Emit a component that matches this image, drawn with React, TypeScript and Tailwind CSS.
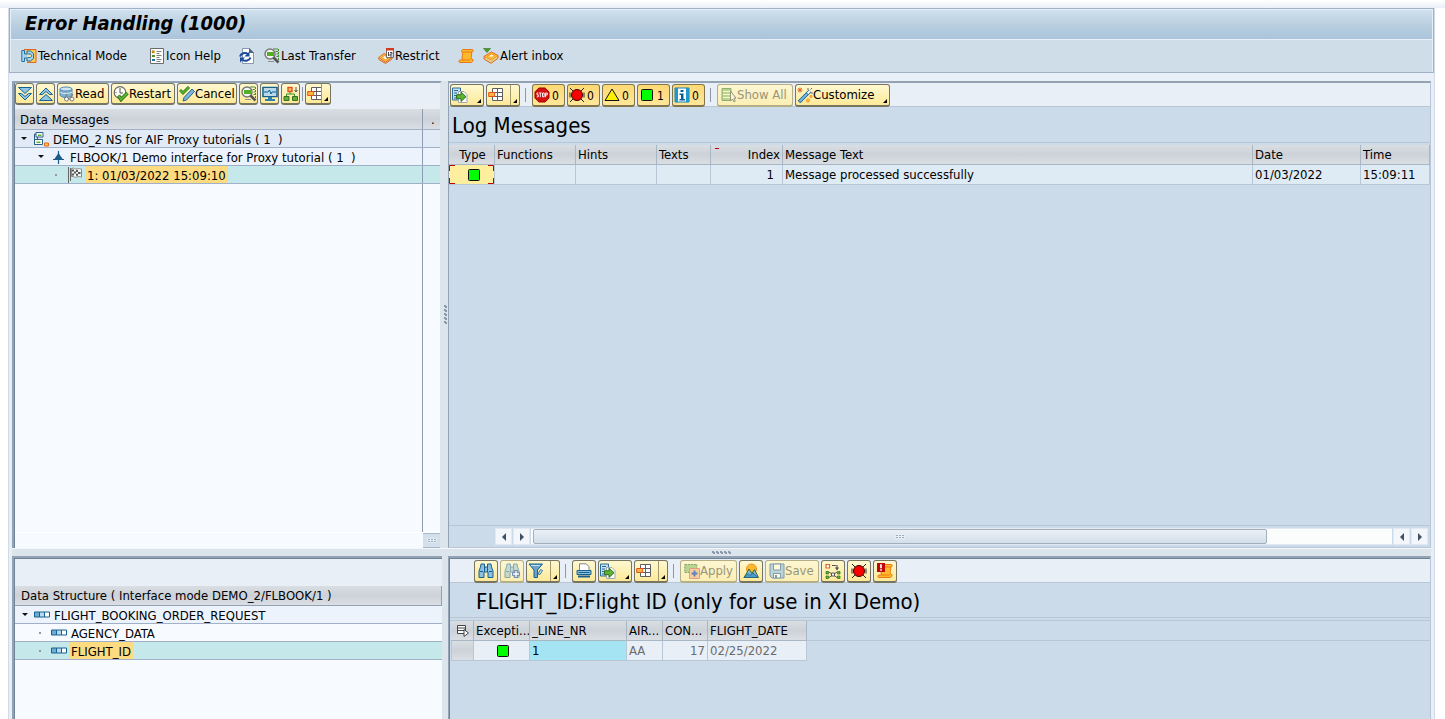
import React from "react";

type IconProps = { children: React.ReactNode; className?: string; box?: string };

function Svg({ children, className = "h-4 w-4", box = "0 0 16 16" }: IconProps) {
  return (
    <svg viewBox={box} className={`shrink-0 ${className}`} fill="none" aria-hidden="true">
      {children}
    </svg>
  );
}

/* ---------- icons ---------- */

const TechIcon = () => (
  <Svg>
    <path d="M3 1.500h12v13H6" fill="#fbc94f" stroke="#e2661c" />
    <path d="M.8 2.500v11h2.700v-3.500H6v3h3.500l3-2.500V5.500L9.500 3H6v3H3.500V2.500z" fill="#a9d4ee" stroke="#1d6fa5" />
    <path d="M6.500 6H9c2 0 2 3.500 0 3.500H6.500" stroke="#1d6fa5" fill="#fde7a8" />
  </Svg>
);

const LegendIcon = () => (
  <Svg>
    <path d="M1.500.5h13v15h-13z" fill="#fff" stroke="#6b6b6b" />
    <path d="M3 2.500l2.500 2.500M5.500 2.500L3 5" stroke="#b88a00" strokeWidth="1.200" />
    <path d="M3 7h3v2H3z" fill="#4d8b2b" />
    <path d="M3 11h3v2H3z" fill="#1d6fa5" />
    <path d="M7.500 3.500h5M7.500 5.500h3M7.500 7.500h5M7.500 9.500h3M7.500 11.500h5M7.500 13.500h4" stroke="#7d7d7d" />
  </Svg>
);

const RefreshIcon = () => (
  <Svg>
    <path d="M4.500.5h7l4 4v11h-11z" fill="#fff" stroke="#8b98ab" />
    <path d="M11.500.5v4h4" fill="#53617a" stroke="#53617a" />
    <path d="M2 8.500a5 4.500 0 0 1 8-2.500" stroke="#174a9b" strokeWidth="2" />
    <path d="M11.500 3.500v5h-5z" fill="#174a9b" />
    <path d="M12.500 9.500a5 4.500 0 0 1-8 2.200" stroke="#174a9b" strokeWidth="2" />
    <path d="M2 14.500V9.500h5z" fill="#174a9b" />
  </Svg>
);

const SearchDocIcon = () => (
  <Svg>
    <path d="M9 1h5M11.500 3.500h2.500M12.500 6h2M12.500 8.500h2" stroke="#4d8b2b" strokeWidth="1.200" />
    <path d="M14.500 1v11" stroke="#3f8f22" strokeDasharray="2 1" />
    <circle cx="6" cy="6" r="5" fill="#f2f5f2" stroke="#777" strokeWidth="1.400" />
    <path d="M3 4h7v4H3z" fill="#54ae26" />
    <path d="M9.500 9.500l5 5" stroke="#555" strokeWidth="2.600" />
    <path d="M4 13.500h6" stroke="#8f8f8f" />
  </Svg>
);

const RestrictIcon = () => (
  <Svg>
    <path d="M.8 9.500L6 5.500l8 4-6.500 4.800z" fill="#fdc53a" stroke="#e2661c" />
    <path d="M3.500 9.500L6.500 7.500 11 9.500l-3.500 2.500z" fill="#fff6da" stroke="#ef8c1e" />
    <path d="M.8 9.500v2l6.700 4 6.500-4.500v-1.500" stroke="#e2661c" />
    <path d="M8.500.5h7v9h-7z" fill="#fff" stroke="#7a6b6b" />
    <path d="M8 0h8v2.500H8z" fill="#d13a1e" />
    <path d="M10.500 4v4M12 4.500h2v1.700h-2V8h2.500" stroke="#333" strokeWidth=".9" />
  </Svg>
);

const ScrollShape = () => (
  <>
    <path d="M5 1.500h9.500c1 0 1 2.500-.5 2.500h-.5c1 3-1.500 5 .5 7.500h1v1c-.5 1.500-1 2-2 2H2c-1.500 0-1.500-2.500 0-2.500h2.500C3 9 5.500 7 4.500 4.500 3 4.500 3.500 1.500 5 1.500z" fill="#fdb92a" stroke="#e87817" />
    <path d="M5 4h8.500M4.500 12h8" stroke="#e87817" />
  </>
);

const ScrollIcon = () => (
  <Svg>
    <ScrollShape />
  </Svg>
);

const AlertInboxIcon = () => (
  <Svg>
    <path d="M1 8.500L8.500 4l6.500 3.500-6.500 4.500z" fill="#fdc53a" stroke="#e2661c" />
    <path d="M4 8.500l4.500-2.500 3.500 1.800-3.700 2.400z" fill="#fff6da" stroke="#ef8c1e" />
    <path d="M1 8.500V11l7 4.300 7-5V7.500" stroke="#e2661c" fill="#fdc53a" fillOpacity=".5" />
    <path d="M.5.5h7L4 4.500z" fill="#4d9c2c" stroke="#2f6e1a" strokeWidth=".6" />
  </Svg>
);

const ExpandIcon = () => (
  <Svg>
    <path d="M1.500 1.500h13L8 7.500zM1.500 7.500h3L8 10.500l3.500-3h3L8 14z" fill="#8fc6e6" stroke="#17618f" />
  </Svg>
);

const CollapseIcon = () => (
  <Svg>
    <path d="M1.500 14.500h13L8 8.500zM1.500 8.500h3L8 5.500l3.500 3h3L8 2z" fill="#8fc6e6" stroke="#17618f" />
  </Svg>
);

const ReadIcon = () => (
  <Svg>
    <path d="M1 3v6c0 1.500 3 2.500 6 2.500s6-1 6-2.500V3" fill="#7fb0d2" stroke="#5288ae" />
    <ellipse cx="7" cy="3" rx="6" ry="2" fill="#cfe5f3" stroke="#5288ae" />
    <path d="M1 6c1 2 10 2 12 0" stroke="#d8eaf5" />
    <circle cx="7.500" cy="13" r="2" fill="#fff" stroke="#777" />
    <circle cx="13" cy="13" r="2" fill="#fff" stroke="#777" />
    <path d="M6 12l2-4M12 12l2-4M9.500 13h1.500" stroke="#777" />
  </Svg>
);

const RestartIcon = () => (
  <Svg>
    <circle cx="7" cy="6.500" r="5.800" fill="#fdfdf6" stroke="#6c6c6c" strokeWidth="1.200" />
    <path d="M7 2v5h3M2.500 6.500h1M7 11v1" stroke="#555" />
    <path d="M5.500 9.500l2.500 4 6.500-6.500" stroke="#2f6e1a" strokeWidth="3.600" />
    <path d="M5.500 9.500l2.500 4 6.500-6.500" stroke="#5cb531" strokeWidth="1.800" />
  </Svg>
);

const CancelIcon = () => (
  <Svg>
    <path d="M1 4l3 3 6-6" stroke="#2f7a1c" strokeWidth="3" />
    <path d="M1 4l3 3 6-6" stroke="#5cb531" strokeWidth="1.500" />
    <path d="M13 3l2.500 2.500-8 8.500-3.500 1 1-3.500z" fill="#7cb5da" stroke="#27658f" />
  </Svg>
);

const MonitorIcon = () => (
  <Svg>
    <path d="M1 1.500h14v9H1z" fill="#fff" stroke="#17618f" strokeWidth="1.600" />
    <path d="M2 3h12v6H2z" fill="#b4daf0" />
    <path d="M2 6h4l1.500-2 1.500 4 1-2h4" stroke="#17618f" />
    <path d="M6 11h4v2h3v2H3v-2h3z" fill="#2f7fb0" />
  </Svg>
);

const HierarchyIcon = () => (
  <Svg>
    <path d="M7 5v3M3.500 11V8h8v3" stroke="#3f8f22" />
    <path d="M5 1.500h4v4H5z" fill="#ffc36a" stroke="#e2541c" strokeWidth="1.400" />
    <path d="M1 10.500h5v4H1zM9.500 10.500h5v4h-5z" fill="#5cb531" stroke="#3d6e28" />
    <path d="M13 1v5M11.500 4L13 6l1.500-2" stroke="#555" />
  </Svg>
);

const LayoutIcon = () => (
  <Svg>
    <path d="M4.500 1.500h10v12h-10z" fill="#fff" stroke="#5f5f5f" />
    <path d="M9.500 1.500v12M4.500 5.500h10M4.500 9.500h10" stroke="#5f5f5f" />
    <path d="M.7 5.500h6v4h-6z" fill="#fdb640" stroke="#e2541c" />
  </Svg>
);

const ExportIcon = () => (
  <Svg>
    <path d="M.5 1h8v12h-8z" fill="#c3dff0" stroke="#2b6d99" />
    <path d="M2 3.500h4M2 6h3M2 8.500h2M2 11h2" stroke="#2b6d99" />
    <path d="M6.500 4.500h5.500l3 3v8H6.500z" fill="#fff" stroke="#a0a8b0" />
    <path d="M4.500 7.800H9V5l5 4.700-5 4.800v-2.800H4.500z" fill="#5cb531" stroke="#2f6e1a" />
  </Svg>
);

const StopIcon = () => (
  <Svg>
    <path d="M4.900 1h6.200L15 4.900v6.200L11.100 15H4.900L1 11.100V4.900z" fill="#d40f0f" stroke="#9c0000" />
    <path d="M4.300 6H3v1.800h1.300v2H2.800M5 6h2.600M6.300 6v4.200M8.500 6h1.700v3.800H8.500zM11.500 10.200V6h1.800v2h-1.800" stroke="#fff" strokeWidth=".9" />
  </Svg>
);

const RedLightIcon = () => (
  <Svg>
    <path d="M1 1l3 3M15 1l-3 3M1 15l3-3M15 15l-3-3M1 5.500v5M15 5.500v5" stroke="#222" />
    <circle cx="8" cy="8" r="5.500" fill="#fb0000" stroke="#3a0000" />
  </Svg>
);

const WarnIcon = () => (
  <Svg>
    <path d="M8 2l7 11.500H1z" fill="#fff200" stroke="#111" />
  </Svg>
);

const GreenIcon = () => (
  <Svg className="h-3 w-3" box="0 0 12 12">
    <rect x=".5" y=".5" width="11" height="11" rx="1" fill="#00ff00" stroke="#111" />
  </Svg>
);

const InfoIcon = () => (
  <Svg>
    <path d="M1 1h14v14H1z" fill="#fff" stroke="#1380b5" />
    <path d="M1 1h3v14H1zM12 1h3v14h-3z" fill="#1f97cf" />
    <path d="M6.500 3h3v2h-3zM5.500 6.500h4V12H11v1.500H5.500V12H7V8H5.500z" fill="#075e93" />
  </Svg>
);

const ShowAllIcon = () => (
  <Svg>
    <path d="M1 1.500h9v12H1z" fill="#b9d48f" stroke="#8fae72" />
    <path d="M2 4.500h7M2 7.500h7M2 10.500h7" stroke="#fdf6cf" strokeWidth="1.200" />
    <path d="M9.500 4v10l2-2 1.500 3 1.200-.8-1.200-3H15z" fill="#f6f3dd" stroke="#989878" />
  </Svg>
);

const WandIcon = () => (
  <Svg>
    <path d="M2 15L13 4" stroke="#17618f" strokeWidth="3.600" />
    <path d="M2.500 14.500L10 7" stroke="#79bbe2" strokeWidth="1.800" />
    <path d="M10.500 6.500L13 4" stroke="#fff" strokeWidth="1.800" />
    <path d="M.5 3h5M3 .5v5M1.200 1.200l3.600 3.600M4.800 1.200L1.200 4.800" stroke="#e2661c" />
    <path d="M11 1v2M15 1l-1.500 1.500M16 6h-2" stroke="#666" />
    <circle cx="14" cy="9.500" r="1.300" fill="#fdb640" stroke="#ef8c1e" strokeWidth=".6" />
    <circle cx="11" cy="13.500" r="1.700" fill="#fdb640" stroke="#ef8c1e" strokeWidth=".6" />
  </Svg>
);

const Binoculars = () => (
  <>
    <path d="M3 1h3.500v3h3V1H13l.5 3 1.500 4v6.500h-5V9H6v5.500H1V8l1.500-4z" fill="#8dbfdf" stroke="#17618f" />
    <path d="M2 8.500h3M11 8.500h3M6.500 4v5M9.500 4v5" stroke="#17618f" />
  </>
);

const FindIcon = () => (
  <Svg>
    <Binoculars />
  </Svg>
);

const FindNextIcon = () => (
  <Svg>
    <g opacity=".5">
      <Binoculars />
    </g>
    <path d="M12 7v8M8 11h8" stroke="#6d86b5" strokeWidth="3.400" />
    <path d="M12 8v6M9 11h6" stroke="#fff" strokeWidth="1.400" />
  </Svg>
);

const FilterIcon = () => (
  <Svg>
    <path d="M1 1h13.500L9.500 7v7.500H6V7z" fill="#6ba3c9" stroke="#17618f" />
    <path d="M3 2.500h9" stroke="#c6e0f0" />
    <path d="M10 11l2.500-4.500 2 1-2.500 4z" fill="#c6e0f0" stroke="#17618f" strokeWidth=".8" />
  </Svg>
);

const PrintIcon = () => (
  <Svg>
    <path d="M3.500 7V.8H10l3 2.700V7" fill="#fff" stroke="#7d8791" />
    <path d="M1 7.500h14v4H1z" fill="#8dbfdf" stroke="#17618f" />
    <path d="M2 13.500h12" stroke="#17618f" strokeWidth="2" />
    <path d="M2.500 9.500h11" stroke="#17618f" />
  </Svg>
);

const ApplyIcon = () => (
  <Svg>
    <path d="M.8 1.500h12v8H.8z" fill="#b9d48f" stroke="#7fa26c" strokeDasharray="2 1" />
    <path d="M5.500 5.500h10v10h-10z" fill="#f7cda0" stroke="#e0a080" />
    <path d="M10.500 7.500v6M7.500 10.500h6" stroke="#5c86b5" strokeWidth="2" />
  </Svg>
);

const OverviewIcon = () => (
  <Svg>
    <circle cx="8.500" cy="6" r="5" fill="#fdb92a" stroke="#ef8c1e" />
    <path d="M1 14.500L6 6l3 4.500 2.500-4 4 8z" fill="#7fb8da" stroke="#3d6e28" />
    <path d="M1 14.500l4-4 2 2 3-2.500 5 4.500z" fill="#4c9ac8" stroke="#17618f" strokeWidth=".8" />
  </Svg>
);

const SaveIcon = () => (
  <Svg>
    <path d="M1 1h14v14H3l-2-2z" fill="#bcd3da" stroke="#7f9cab" />
    <path d="M4.500 1h7v6h-7zM4.500 10.500h7V15h-7z" fill="#fff9dc" stroke="#7f9cab" />
    <path d="M6 12h2v3H6z" fill="#7f9cab" />
  </Svg>
);

const MapIcon = () => (
  <Svg>
    <path d="M1 1.500h3.500V5H1z" fill="#fff" stroke="#e2661c" strokeWidth="1.200" />
    <path d="M7 2.500h4M12 2v4M10.500 4.500L12 6.500l1.500-2" stroke="#555" strokeWidth="1.200" />
    <path d="M4 9l8 5.500M12 9l-8 5.500" stroke="#555" />
    <path d="M1 8.500h2.500V11H1zM12.500 8.500H15V11h-2.500zM1 13h2.500v2.500H1zM12.500 13H15v2.500h-2.500z" fill="#5cb531" stroke="#2f6e1a" strokeWidth=".7" />
    <path d="M6.500 10h3v3h-3z" fill="#fff" stroke="#555" />
  </Svg>
);

const ScrollErrIcon = () => (
  <Svg>
    <ScrollShape />
    <path d="M0 0h8v9H0z" fill="#c10808" />
    <path d="M4 1.200v4M4 6.300v1.500" stroke="#fff" strokeWidth="1.700" />
  </Svg>
);

const NamespaceIcon = () => (
  <Svg>
    <path d="M3 1.500h7v4.500H3z" fill="#fff" stroke="#2c5f86" />
    <path d="M5 3.500h3.500V5H5z" fill="#5cb531" />
    <path d="M1.500 8.500h8v5h-8z" fill="#fff" stroke="#2c5f86" />
    <path d="M3.500 10.500h4V12h-4z" fill="#5cb531" />
    <path d="M4.500 6v2.500M1.500 13.500V3h1.500" stroke="#2c5f86" />
    <path d="M11.500 12h4v3h-4z" fill="#fdc53a" stroke="#e2661c" />
  </Svg>
);

const InterfaceIcon = () => (
  <Svg>
    <path d="M8.500 2v13M3 10.500h11" stroke="#1d5c86" strokeWidth="1.200" />
    <path d="M8.500 4l4.500 6.500H4z" fill="#1d5c86" />
  </Svg>
);

const FlagIcon = () => (
  <Svg>
    <path d="M1.500 0v16M3.500 1v13" stroke="#666" />
    <path d="M4.500 1.500c3-1.500 3.500 1.500 5.500.5 2-1 3 0 4.500 0v8c-2 0-3-1-4.500 0-2 1-3-1-5.500-.5z" fill="#f4f8f8" stroke="#888" />
    <path d="M5 2.500h2v2H5zM9 3h2v2H9zM7 4.500h2v2H7zM11 5h2.500v2H11zM5 6.500h2v2H5zM9 6.800h2v2H9z" fill="#555" />
  </Svg>
);

const StructIcon = () => (
  <Svg className="h-[7px] w-4" box="0 0 16 7">
    <path d="M.5 1h5v5h-5z" fill="#6aaed6" stroke="#17618f" />
    <path d="M5.500 1h5v5h-5z" fill="#b9d9ec" stroke="#17618f" />
    <path d="M10.500 1h5v5h-5z" fill="#fff" stroke="#17618f" />
  </Svg>
);

const SelectAllIcon = () => (
  <Svg className="h-3 w-3" box="0 0 12 12">
    <path d="M.5.5h8v8h-8zM.5 3h8M.5 5.500h8" stroke="#444" fill="#fff" />
    <path d="M7 4.500v7l4.500-3.500z" fill="#fff" stroke="#444" />
  </Svg>
);

/* ---------- building blocks ---------- */

type BtnProps = {
  icon: React.ReactNode;
  text?: string;
  label?: string;
  width: string;
  short?: boolean;
  menu?: boolean;
  split?: boolean;
  pressed?: boolean;
  disabled?: boolean;
};

function Btn({ icon, text, label, width, short, menu, split, pressed, disabled }: BtnProps) {
  const tone = disabled
    ? "border-[#b5ae86] text-[#98957c] from-[#fdf6d2] to-[#fbefb4]"
    : pressed
      ? "border-[#83754a] text-black from-[#fdd873] to-[#ffe69a]"
      : "border-[#77745f] text-black from-[#fff8d0] to-[#fde997]";
  return (
    <button
      type="button"
      aria-label={label ?? text}
      disabled={disabled}
      className={`relative flex shrink-0 items-center overflow-hidden whitespace-nowrap rounded-[3px] border border-b-2 bg-linear-to-b px-px text-[13px] leading-4 ${short ? "h-[22px]" : "h-[23px]"} ${width} ${tone}`}
    >
      {icon}
      {text && <span className={pressed ? "pt-0.5 pl-0.5 text-[12px]" : "pt-px"}>{text}</span>}
      {split && <span className="absolute inset-y-0 right-2 w-px bg-[#a39a6c]" />}
      {menu && (
        <svg viewBox="0 0 4 4" className="absolute right-0.5 bottom-0.5 h-1 w-1" aria-hidden="true">
          <path d="M4 0v4H0z" fill="#000" />
        </svg>
      )}
    </button>
  );
}

const Sep = ({ className = "mx-1" }: { className?: string }) => (
  <span className={`h-3.5 w-px shrink-0 bg-[#8c98a6] ${className}`} />
);

function AppAction({ icon, text, label, className = "" }: { icon: React.ReactNode; text?: string; label?: string; className?: string }) {
  return (
    <button type="button" aria-label={label ?? text} className={`flex shrink-0 items-center gap-px whitespace-nowrap ${className}`}>
      {icon}
      {text && <span>{text}</span>}
    </button>
  );
}

const Caret = () => (
  <svg viewBox="0 0 6 3" className="h-[3px] w-1.5 shrink-0" aria-hidden="true">
    <path d="M0 0h6L3 3z" fill="#111" />
  </svg>
);

const Leaf = () => <span className="h-0.5 w-0.5 shrink-0 bg-[#9a9a9a]" />;

type TreeRowProps = {
  indent: string;
  marker: React.ReactNode;
  icon: React.ReactNode;
  text: string;
  bg: string;
  selected?: boolean;
  tail?: boolean;
};

function TreeRow({ indent, marker, icon, text, bg, selected, tail }: TreeRowProps) {
  return (
    <li className={`flex h-[18px] border-b border-[#9fb0c8] ${bg}`}>
      <div className={`flex min-w-0 flex-1 items-center ${indent}`}>
        <span className="flex w-3 shrink-0 items-center">{marker}</span>
        {icon}
        <span className={`ml-0.5 h-[17px] whitespace-pre px-0.5 leading-[19px] ${selected ? "bg-[#fddb80]" : ""}`}>{text}</span>
      </div>
      {tail && <span className="w-[18px] shrink-0 border-l border-[#8d9cae]" />}
    </li>
  );
}

const Arrow = ({ dir }: { dir: "left" | "right" }) => (
  <button type="button" aria-label={`Scroll ${dir}`} className="flex h-[17px] w-[17px] shrink-0 items-center justify-center border border-[#e2e9f2] bg-[#f3f6fb]">
    <svg viewBox="0 0 4 8" className="h-2 w-1" aria-hidden="true">
      <path d={dir === "left" ? "M4 0v8L0 4z" : "M0 0v8l4-4z"} fill="#3f5263" />
    </svg>
  </button>
);

const Grip = () => (
  <span className="grid grid-cols-3 gap-px">
    {Array.from({ length: 6 }, (_, i) => (
      <span key={i} className="h-px w-0.5 bg-[#9aabbb] outline outline-[#eef3f8]/50" />
    ))}
  </span>
);

const GripDots = ({ vertical }: { vertical?: boolean }) => (
  <svg
    viewBox={vertical ? "0 0 3 20" : "0 0 20 3"}
    className={vertical ? "h-5 w-[3px]" : "h-[3px] w-5"}
    shapeRendering="crispEdges"
    aria-hidden="true"
  >
    {[0, 4, 8, 12, 16].map((n) => (
      <path
        key={n}
        d={vertical ? `M0 ${n}h2v1h1v2H1v-1H0z` : `M${n} 0h2v1h1v2h-2v-1h-1z`}
        fill="#8c9bab"
      />
    ))}
  </svg>
);

const headGrad = "bg-linear-to-b from-[#d9dee3] via-[#cdd2d9] to-[#dbdfe4]";
const th = `h-5 border-r border-b border-[#a9b6c4] pt-px pb-0 pl-0.5 pr-0 text-left font-normal leading-[18px] whitespace-nowrap overflow-hidden ${headGrad}`;
const td = "h-5 border-r border-b border-[#b9c6d6] p-0 px-0.5 leading-[18px] whitespace-nowrap overflow-hidden";

/* ---------- panels ---------- */

function MessagesPanel() {
  return (
    <section className="flex min-w-0 flex-col border-t-2 border-r-2 border-l-2 border-t-[#94a3b3] border-r-[#dbe5eb] border-l-[#94a3b3]">
      <div className="flex flex-1 flex-col border-l border-[#6f8496] bg-[#f7fbff]">
        <div className="flex h-[26px] shrink-0 items-center gap-0.5 bg-[#e8eff7] pb-1">
          <Btn short width="w-[19px]" icon={<ExpandIcon />} label="Expand" />
          <Btn short width="w-[19px]" icon={<CollapseIcon />} label="Collapse" />
          <Btn short width="w-[52px]" icon={<ReadIcon />} text="Read" />
          <Btn short width="w-16" icon={<RestartIcon />} text="Restart" />
          <Btn short width="w-15" icon={<CancelIcon />} text="Cancel" />
          <Btn short width="w-[19px]" icon={<SearchDocIcon />} label="Search" />
          <Btn short width="w-[19px]" icon={<MonitorIcon />} label="Monitor" />
          <Btn short width="w-[19px]" icon={<HierarchyIcon />} label="Hierarchy" />
          <Sep className="mx-0" />
          <Btn short width="w-[26px]" icon={<LayoutIcon />} label="Layout" menu split />
        </div>
        <div className={`flex h-[21px] shrink-0 border-b border-[#9fb0c8] ${headGrad}`}>
          <h2 className="flex-1 pl-[5px] leading-[22px]">Data Messages</h2>
          <span className="w-[18px] border-l border-[#8d9cae] pl-2 leading-[22px]">.</span>
        </div>
        <ul className="shrink-0">
          <TreeRow tail indent="pl-1.5" bg="bg-[#e1eaf7]" marker={<Caret />} icon={<NamespaceIcon />} text="DEMO_2 NS for AIF Proxy tutorials ( 1  )" />
          <TreeRow tail indent="pl-[23px]" bg="bg-[#ecf3fc]" marker={<Caret />} icon={<InterfaceIcon />} text="FLBOOK/1 Demo interface for Proxy tutorial ( 1  )" />
          <TreeRow tail selected indent="pl-10" bg="bg-[#c5e9eb]" marker={<Leaf />} icon={<FlagIcon />} text="1: 01/03/2022 15:09:10" />
        </ul>
        <div className="flex flex-1">
          <span className="flex-1" />
          <span className="w-[18px] border-l border-[#8d9cae]" />
        </div>
        <div className="flex h-4 shrink-0 justify-end border-t border-white">
          <span className="flex w-[17px] items-center justify-center border-y border-[#a6b7c8] bg-[#d3e0ec]">
            <Grip />
          </span>
        </div>
      </div>
    </section>
  );
}

function StructurePanel() {
  return (
    <section className="flex min-w-0 flex-col border-t-2 border-l-2 border-[#94a3b3]">
      <div className="flex flex-1 flex-col border-t border-l border-[#6f8496] bg-[#f7fbff]">
        <div className="h-[27px] shrink-0 bg-[#e8eff7]" />
        <h2 className={`h-5 shrink-0 border-r border-b border-[#94a3b3] pl-1.5 leading-5 ${headGrad}`}>
          Data Structure ( Interface mode DEMO_2/FLBOOK/1 )
        </h2>
        <ul>
          <TreeRow indent="pl-[7px]" bg="bg-[#ecf3fc]" marker={<Caret />} icon={<StructIcon />} text="FLIGHT_BOOKING_ORDER_REQUEST" />
          <TreeRow indent="pl-6" bg="bg-[#f7fbff]" marker={<Leaf />} icon={<StructIcon />} text="AGENCY_DATA" />
          <TreeRow selected indent="pl-6" bg="bg-[#c5e9eb]" marker={<Leaf />} icon={<StructIcon />} text="FLIGHT_ID" />
        </ul>
      </div>
    </section>
  );
}

function LogPanel() {
  return (
    <section className="flex min-w-0 flex-col border-t-2 border-r border-b border-l border-t-[#94a3b3] border-r-[#b9c6d6] border-b-[#b9c6d6] border-l-[#94a3b3] bg-[#cbdbea]">
      <div className="flex h-6 shrink-0 items-center gap-0.5 border-b border-[#b9c6d6] bg-[#e8eff7] pt-px pl-px">
        <Btn width="w-[34px]" icon={<ExportIcon />} label="Export" menu />
        <Btn width="w-[34px]" icon={<LayoutIcon />} label="Layout" menu split />
        <Sep className="mr-1 ml-[3px]" />
        <Btn width="w-[33px]" pressed icon={<StopIcon />} text="0" label="Stops 0" />
        <Btn width="w-[33px]" pressed icon={<RedLightIcon />} text="0" label="Errors 0" />
        <Btn width="w-[33px]" pressed icon={<WarnIcon />} text="0" label="Warnings 0" />
        <Btn width="w-[33px]" pressed icon={<span className="px-0.5"><GreenIcon /></span>} text="1" label="Successes 1" />
        <Btn width="w-[33px]" pressed icon={<InfoIcon />} text="0" label="Information 0" />
        <Sep className="mr-1 ml-[3px]" />
        <Btn width="w-19" disabled icon={<span className="pl-0.5"><ShowAllIcon /></span>} text="Show All" />
        <Btn width="w-[95px]" icon={<WandIcon />} text="Customize" menu />
      </div>
      <h2 className="h-9 shrink-0 border-b border-[#b9c6d6] pl-[3px] text-[22px] leading-[38px]">Log Messages</h2>
      <table className="mt-0.5 w-full shrink-0 table-fixed border-separate border-spacing-0">
        <colgroup>
          <col className="w-[46px]" />
          <col className="w-[81px]" />
          <col className="w-[81px]" />
          <col className="w-[54px]" />
          <col className="w-[72px]" />
          <col />
          <col className="w-[108px]" />
          <col className="w-[69px]" />
        </colgroup>
        <thead>
          <tr>
            <th className={th}><span className="block text-center">Type</span></th>
            <th className={th}>Functions</th>
            <th className={th}>Hints</th>
            <th className={th}>Texts</th>
            <th className={`${th} relative`}>
              <span className="absolute top-[3px] left-1 h-px w-1 bg-[#c00018]" />
              <span className="block pr-0.5 text-right">Index</span>
            </th>
            <th className={th}>Message Text</th>
            <th className={th}>Date</th>
            <th className={th}>Time</th>
          </tr>
        </thead>
        <tbody className="bg-[#deeaf4]">
          <tr>
            <td className={`${td} relative bg-[#ffee9e]`}>
              <svg className="absolute inset-0 h-full w-full" viewBox="0 0 45 19" preserveAspectRatio="none" fill="none" aria-hidden="true">
                <path d="M6 .5H.5V6M39 .5h5.500V6M.5 13v5.500H6M44.500 13v5.500H39" stroke="#c00010" />
              </svg>
              <span className="flex justify-center pl-1"><GreenIcon /></span>
            </td>
            <td className={td} />
            <td className={td} />
            <td className={td} />
            <td className={`${td} text-right`}><span className="pr-1.5">1</span></td>
            <td className={td}>Message processed successfully</td>
            <td className={td}>01/03/2022</td>
            <td className={td}>15:09:11</td>
          </tr>
        </tbody>
      </table>
      <div className="flex-1" />
      <div className="flex h-[22px] shrink-0 items-center gap-px border-t border-[#b9c6d6] pr-0.5 pl-[46px]">
        <Arrow dir="left" />
        <Arrow dir="right" />
        <div className="flex h-[17px] flex-1 border-y border-[#e2e9f2] bg-[#fbfcfc] pl-0.5">
          <div className="flex w-[85.500%] items-center justify-center rounded-[2px] border border-[#a3afbb] bg-linear-to-b from-[#eaf0f6] to-[#d3dfea]">
            <Grip />
          </div>
        </div>
        <Arrow dir="left" />
        <Arrow dir="right" />
      </div>
    </section>
  );
}

function DetailPanel() {
  const dim = `${td} text-[#6b6b6b]`;
  return (
    <section className="flex min-w-0 flex-col border-t-2 border-r border-l border-t-[#94a3b3] border-r-[#b9c6d6] border-l-[#94a3b3] bg-[#cbdbea]">
      <div className="flex flex-1 flex-col border-t border-l border-[#6f8496]">
        <div className="flex h-6 shrink-0 items-center gap-0.5 border-b border-[#b9c6d6] bg-[#e8eff7] pt-px pl-6">
          <Btn width="w-6" icon={<span className="pl-0.5"><FindIcon /></span>} label="Find" />
          <Btn width="w-6" disabled icon={<span className="pl-0.5"><FindNextIcon /></span>} label="Find next" />
          <Btn width="w-[34px]" icon={<FilterIcon />} label="Filter" menu split />
          <Sep className="mr-1 ml-[3px]" />
          <Btn width="w-6" icon={<span className="pl-0.5"><PrintIcon /></span>} label="Print" />
          <Btn width="w-[34px]" icon={<ExportIcon />} label="Export" menu />
          <Btn width="w-[34px]" icon={<LayoutIcon />} label="Layout" menu split />
          <Sep className="mr-1 ml-[3px]" />
          <Btn width="w-[57px]" disabled icon={<span className="pl-0.5"><ApplyIcon /></span>} text="Apply" />
          <Btn width="w-6" icon={<span className="pl-0.5"><OverviewIcon /></span>} label="Overview" />
          <Btn width="w-[54px]" disabled icon={<span className="pl-0.5"><SaveIcon /></span>} text="Save" />
          <Btn width="w-6" icon={<span className="pl-0.5"><MapIcon /></span>} label="Mapping" />
          <Btn width="w-6" icon={<span className="pl-0.5"><RedLightIcon /></span>} label="Errors" />
          <Btn width="w-6" icon={<span className="pl-0.5"><ScrollErrIcon /></span>} label="Error log" />
        </div>
        <h2 className="h-[35px] shrink-0 border-b border-[#b9c6d6] pl-[26px] text-[22px] leading-[38px]">
          FLIGHT_ID:Flight ID (only for use in XI Demo)
        </h2>
        <div className="mt-0.5 flex border-t border-[#b9c6d6] pl-px">
          <table className="w-[356px] shrink-0 table-fixed border-separate border-spacing-0">
            <colgroup>
              <col className="w-[23px]" />
              <col className="w-14" />
              <col className="w-[97px]" />
              <col className="w-9" />
              <col className="w-[45px]" />
              <col className="w-[99px]" />
            </colgroup>
            <thead>
              <tr>
                <th aria-label="Select all" className={th}><span className="flex justify-center"><SelectAllIcon /></span></th>
                <th className={th}>Excepti...</th>
                <th className={th}>_LINE_NR</th>
                <th className={th}>AIR...</th>
                <th className={th}>CON...</th>
                <th className={th}>FLIGHT_DATE</th>
              </tr>
            </thead>
            <tbody className="bg-[#e8eff7]">
              <tr>
                <td className={`${td} border-l border-[#94a3b3] ${headGrad}`} />
                <td className={td}><span className="flex justify-center pl-0.5"><GreenIcon /></span></td>
                <td className={`${td} bg-[#a5e5f3]`}>1</td>
                <td className={dim}>AA</td>
                <td className={`${dim} text-right`}>17</td>
                <td className={dim}>02/25/2022</td>
              </tr>
            </tbody>
          </table>
          <span className="h-5 flex-1 border-b border-[#b9c6d6]" />
        </div>
      </div>
    </section>
  );
}

export default function App() {
  return (
    <div className="flex min-h-screen flex-col bg-white font-['DejaVu_Sans_Condensed','DejaVu_Sans',sans-serif] text-[13px] leading-4 text-black">
      <div className="h-2 shrink-0 bg-linear-to-b from-white to-[#eaf0f8]" />
      <div className="mr-2.5 ml-2 flex flex-1 flex-col border-x border-[#d0dae8] bg-[#e8eff7]">
        <header className="border border-[#9fb1c5]">
          <h1 className="h-[30px] border border-b-0 border-[#e6eff7] bg-linear-to-b from-[#d0e0ee] via-[#bad0e0] to-[#abc4dc] pl-3.5 text-[20px] leading-[27px] font-bold italic">
            Error Handling (1000)
          </h1>
          <nav className="flex h-[33px] items-center border-x border-t border-[#e6eff7] bg-[#cfdde8] pl-2.5">
            <AppAction className="w-32" icon={<TechIcon />} text="Technical Mode" />
            <AppAction className="w-[89px]" icon={<LegendIcon />} text="Icon Help" />
            <AppAction className="w-[26px]" icon={<RefreshIcon />} label="Refresh" />
            <AppAction className="w-[114px]" icon={<SearchDocIcon />} text="Last Transfer" />
            <AppAction className="w-20" icon={<RestrictIcon />} text="Restrict" />
            <AppAction className="w-[25px]" icon={<ScrollIcon />} label="Log" />
            <AppAction icon={<AlertInboxIcon />} text="Alert inbox" />
          </nav>
        </header>
        <main className="mt-2 mr-[3px] ml-[3px] grid flex-1 grid-cols-[430px_6px_minmax(0,1fr)] grid-rows-[467fr_8px_163fr]">
          <MessagesPanel />
          <div className="flex items-center justify-center bg-[#dbe5eb]">
            <GripDots vertical />
          </div>
          <LogPanel />
          <div className="col-span-3 flex items-center justify-center border-t border-[#f4f7fb] bg-[#dbe5eb]">
            <GripDots />
          </div>
          <StructurePanel />
          <div className="bg-[#dbe5eb]" />
          <DetailPanel />
        </main>
      </div>
    </div>
  );
}
